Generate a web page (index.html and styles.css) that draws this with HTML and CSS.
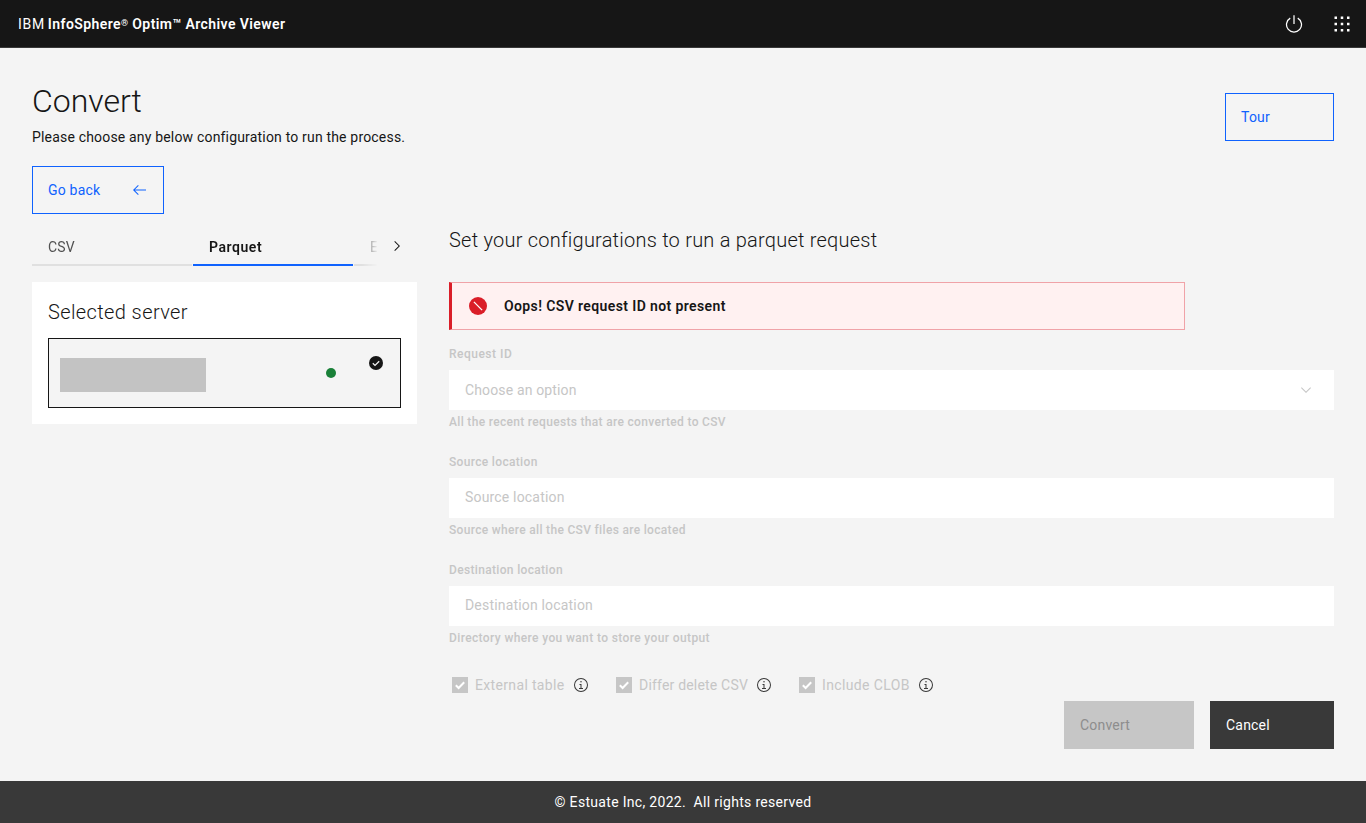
FILE: index.html
```html
<!DOCTYPE html>
<html lang="en">
<head>
<meta charset="utf-8">
<title>Convert - InfoSphere Optim Archive Viewer</title>
<link rel="stylesheet" href="styles.css">
</head>
<body>
<header class="header">
  <div class="brand"><span class="brand-prefix">IBM</span><span class="brand-name">InfoSphere<span class="reg">®</span> Optim™ Archive Viewer</span></div>
  <div class="header-actions">
    <svg class="icon20" viewBox="0 0 32 32"><path d="M22.500 5.740l-1 1.730a11 11 0 1 1-11 0l-1-1.730a13 13 0 1 0 13 0z"/><path d="M15 2h2v14h-2z"/></svg>
    <svg class="icon20" viewBox="0 0 32 32"><path d="M14 4h4v4h-4zM4 4h4v4H4zM24 4h4v4h-4zM14 14h4v4h-4zM4 14h4v4H4zM24 14h4v4h-4zM14 24h4v4h-4zM4 24h4v4H4zM24 24h4v4h-4z"/></svg>
  </div>
</header>
<main class="main">
  <div class="intro">
    <div>
      <h1 class="title">Convert</h1>
      <p class="lead">Please choose any below configuration to run the process.</p>
    </div>
    <button class="btn btn-outline btn-tour">Tour</button>
  </div>
  <button class="btn btn-outline btn-back">Go back<svg class="icon16" viewBox="0 0 32 32"><path d="M14 26l1.410-1.410L7.830 17H30v-2H7.830l7.580-7.590L14 6 4 16z"/></svg></button>
  <div class="columns">
    <aside class="side">
      <div class="tabs">
        <div class="tab-strip">
          <div class="tab">CSV</div>
          <div class="tab active">Parquet</div>
          <div class="tab tab-last">E</div>
        </div>
        <svg class="icon16 tab-next" viewBox="0 0 16 16"><path d="M11 8l-5 5-.7-.7L9.600 8 5.300 3.700 6 3z"/></svg>
      </div>
      <section class="card">
        <h2 class="card-title">Selected server</h2>
        <div class="server">
          <div class="server-name"></div>
          <div class="status"></div>
          <svg class="icon16 check" viewBox="0 0 16 16"><circle cx="8" cy="8" r="7"/><path class="tick" d="M4.800 8.200l2.200 2.200 4.200-4.200"/></svg>
        </div>
      </section>
    </aside>
    <section class="form">
      <h2 class="form-title">Set your configurations to run a parquet request</h2>
      <div class="alert">
        <svg class="icon20" viewBox="0 0 20 20"><circle cx="10" cy="10" r="9" fill="#da1e28"/><path d="M5.900 5.900l8.200 8.200" stroke="#fff" stroke-width="1.300"/></svg>
        <span class="alert-text">Oops! CSV request ID not present</span>
      </div>
      <div class="field">
        <label class="label label-request">Request ID</label>
        <div class="input input-select">Choose an option<svg class="icon16" viewBox="0 0 16 16"><path d="M8 11L3 6l.7-.7L8 9.600l4.300-4.300.7.7z"/></svg></div>
        <p class="helper">All the recent requests that are converted to CSV</p>
      </div>
      <div class="field">
        <label class="label">Source location</label>
        <div class="input">Source location</div>
        <p class="helper">Source where all the CSV files are located</p>
      </div>
      <div class="field">
        <label class="label">Destination location</label>
        <div class="input">Destination location</div>
        <p class="helper helper-wide">Directory where you want to store your output</p>
      </div>
      <div class="options">
        <div class="option option-table"><span class="box"><svg viewBox="0 0 16 16"><path d="M3.800 8.300l2.800 2.700 5.600-5.800"/></svg></span><span>External table</span><svg class="icon16 info" viewBox="0 0 32 32"><path d="M17 22v-8h-4v2h2v6h-3v2h8v-2zM16 8a1.500 1.500 0 1 0 0 3 1.500 1.500 0 0 0 0-3z"/><path d="M16 30a14 14 0 1 1 14-14 14 14 0 0 1-14 14zm0-26a12 12 0 1 0 12 12A12 12 0 0 0 16 4z"/></svg></div>
        <div class="option option-delete"><span class="box"><svg viewBox="0 0 16 16"><path d="M3.800 8.300l2.800 2.700 5.600-5.800"/></svg></span><span>Differ delete CSV</span><svg class="icon16 info" viewBox="0 0 32 32"><path d="M17 22v-8h-4v2h2v6h-3v2h8v-2zM16 8a1.500 1.500 0 1 0 0 3 1.500 1.500 0 0 0 0-3z"/><path d="M16 30a14 14 0 1 1 14-14 14 14 0 0 1-14 14zm0-26a12 12 0 1 0 12 12A12 12 0 0 0 16 4z"/></svg></div>
        <div class="option option-clob"><span class="box"><svg viewBox="0 0 16 16"><path d="M3.800 8.300l2.800 2.700 5.600-5.800"/></svg></span><span>Include CLOB</span><svg class="icon16 info" viewBox="0 0 32 32"><path d="M17 22v-8h-4v2h2v6h-3v2h8v-2zM16 8a1.500 1.500 0 1 0 0 3 1.500 1.500 0 0 0 0-3z"/><path d="M16 30a14 14 0 1 1 14-14 14 14 0 0 1-14 14zm0-26a12 12 0 1 0 12 12A12 12 0 0 0 16 4z"/></svg></div>
      </div>
      <div class="actions">
        <button class="btn btn-disabled">Convert</button>
        <button class="btn btn-cancel">Cancel</button>
      </div>
    </section>
  </div>
</main>
<footer class="footer">© Estuate Inc, 2022.&nbsp; All rights reserved</footer>
</body>
</html>
```
FILE: styles.css
```css
* { box-sizing: border-box; }
body {
  margin: 0;
  height: 823px;
  display: flex;
  flex-direction: column;
  background: #f4f4f4;
  color: #161616;
  font: 400 14px/18px Roboto, "Liberation Sans", sans-serif;
  letter-spacing: 0.18px;
  overflow: hidden;
}
h1, h2, p { margin: 0; }
svg { flex: none; fill: currentColor; }
.icon20 { width: 20px; height: 20px; }
.icon16 { width: 16px; height: 16px; }

.header {
  height: 48px;
  flex: none;
  display: flex;
  align-items: center;
  justify-content: space-between;
  padding: 0 14px 0 18px;
  background: #161616;
  border-bottom: 1px solid #393939;
  color: #fff;
}
.brand { display: flex; gap: 3px; }
.brand-prefix { letter-spacing: 0.7px; }
.brand-name { font-weight: 600; letter-spacing: 0.41px; }
.reg { font-size: 9px; line-height: 1; vertical-align: 3px; }
.header-actions { display: flex; gap: 28px; }

.main { flex: 1; padding: 33px 32px 0; }
.intro { display: flex; justify-content: space-between; }
.title { font-size: 32px; line-height: 40px; font-weight: 300; letter-spacing: 0; }
.lead { margin-top: 7px; }
.btn {
  height: 48px;
  display: flex;
  align-items: center;
  justify-content: space-between;
  padding: 0 15px;
  border: 1px solid transparent;
  font: inherit;
  letter-spacing: 0.2px;
}
.btn-outline { background: transparent; border-color: #0f62fe; color: #0f62fe; }
.btn-tour { width: 109px; margin-top: 12px; }
.btn-back { width: 132px; margin-top: 20px; padding-right: 16.5px; }

.columns { display: flex; gap: 32px; margin-top: 16px; }
.side { width: 385px; flex: none; }
.tabs { display: flex; height: 36px; }
.tab-strip {
  width: 345px;
  display: flex;
  gap: 1px;
  -webkit-mask-image: linear-gradient(to right, #000 330px, transparent 346px);
  mask-image: linear-gradient(to right, #000 330px, transparent 346px);
}
.tab {
  width: 160px;
  flex: none;
  padding: 8px 16px 0;
  border-bottom: 2px solid #e0e0e0;
  color: #525252;
}
.tab.active { border-color: #0f62fe; color: #161616; font-weight: 600; letter-spacing: 0.55px; }
.tab-last { width: 23px; padding: 8px 0 0 16px; white-space: nowrap; }
.tab-next { margin: 8px 0 0 12px; }
.card { height: 142px; margin-top: 16px; padding: 16px; background: #fff; }
.card-title { font-size: 20px; line-height: 28px; font-weight: 300; letter-spacing: 0.39px; }
.server {
  display: flex;
  height: 70px;
  margin-top: 12px;
  padding: 16px 16px 0 11px;
  border: 1px solid #161616;
  background: #f4f4f4;
}
.server-name { width: 146px; height: 34px; margin-top: 3px; background: #c3c3c3; }
.status { width: 10px; height: 10px; margin: 13px 0 0 120px; border-radius: 50%; background: #198038; }
.check { margin-left: auto; }
.tick { fill: none; stroke: #f4f4f4; stroke-width: 1.3; }

.form { flex: 1; color: #c6c6c6; }
.form-title { margin-top: -4px; font-size: 20px; line-height: 28px; font-weight: 300; letter-spacing: 0.23px; color: #161616; }
.alert {
  width: 736px;
  height: 48px;
  margin-top: 28px;
  display: flex;
  align-items: center;
  gap: 16px;
  padding-left: 16px;
  border: 1px solid #f0a3a8;
  border-left: 3px solid #da1e28;
  background: #fff1f1;
  color: #161616;
}
.alert-text { font-weight: 600; letter-spacing: 0.39px; }
.field { margin-top: 16px; height: 92px; font-size: 12px; line-height: 16px; font-weight: 500; }
.label { display: block; height: 24px; letter-spacing: 0.33px; }
.label-request { letter-spacing: 0.5px; }
.input {
  height: 40px;
  display: flex;
  align-items: center;
  justify-content: space-between;
  padding: 0 20px 2px 16px;
  background: #fff;
  font-size: 14px;
  font-weight: 400;
}
.input-select { padding-bottom: 0; letter-spacing: 0.14px; }
.helper { margin-top: 4px; letter-spacing: 0.32px; }
.helper-wide { letter-spacing: 0.38px; }
.options { display: flex; margin: 23px 0 0 3px; height: 16px; }
.option { display: flex; align-items: center; }
.option-table { width: 164px; letter-spacing: 0.34px; }
.option-delete { width: 183px; letter-spacing: 0.19px; }
.option-clob { letter-spacing: 0.37px; }
.box { width: 16px; height: 16px; margin-right: 7px; background: #c6c6c6; }
.box svg { display: block; fill: none; stroke: #fff; stroke-width: 2; }
.info { margin-left: 8px; color: #393939; }
.actions { display: flex; justify-content: flex-end; gap: 16px; margin-top: 8px; }
.btn-disabled { width: 130px; background: #c6c6c6; color: #8d8d8d; }
.btn-cancel { width: 124px; background: #393939; color: #fff; }

.footer {
  height: 42px;
  flex: none;
  display: flex;
  align-items: center;
  justify-content: center;
  background: #393939;
  color: #fff;
  letter-spacing: 0.31px;
}
```
